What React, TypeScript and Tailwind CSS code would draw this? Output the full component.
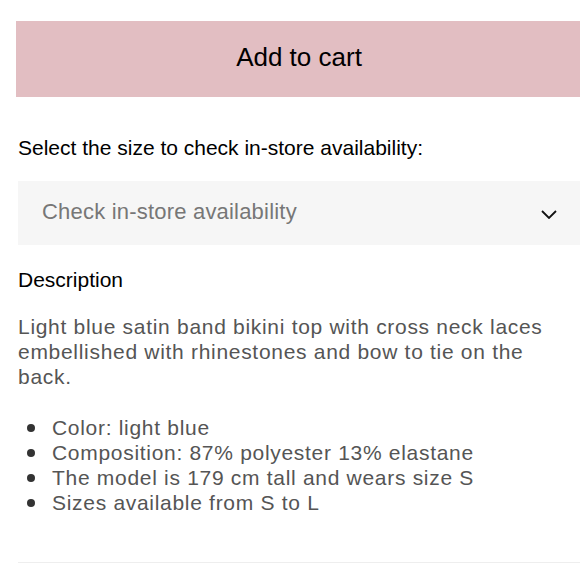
const details = [
  "Color: light blue",
  "Composition: 87% polyester 13% elastane",
  "The model is 179 cm tall and wears size S",
  "Sizes available from S to L",
];

export default function App() {
  return (
    <div className="min-h-screen w-[580px] overflow-hidden bg-white font-['Liberation_Sans',Arial,sans-serif]">
      <div className="pt-[21px] pl-4">
        {/* Add to cart */}
        <button className="flex h-[76px] w-[566px] items-center justify-center bg-[#e2bec2] pb-[3px] text-[26px] text-black">
          Add to cart
        </button>
      </div>

      <div className="pl-[18px]">
        <p className="mt-[38px] text-[21px] leading-[25px] text-black">
          Select the size to check in-store availability:
        </p>

        {/* In-store availability select */}
        <div className="mt-[21px] flex h-[64px] w-[562px] items-center justify-between bg-[#f6f6f6] pl-6 pr-[23px]">
          <span className="pb-[4px] text-[22px] tracking-[0.2px] text-[#777777]">Check in-store availability</span>
          <svg width="16" height="9" viewBox="0 0 16 9" className="mt-[2px]">
            <polyline points="1,1 8,8 15,1" fill="none" stroke="#111" strokeWidth="1.8" />
          </svg>
        </div>

        <h2 className="mt-[22px] text-[21px] leading-[25px] text-black">Description</h2>

        <p className="mt-[22px] w-[545px] text-[21px] leading-[25px] tracking-[0.7px] text-[#555555]">
          Light blue satin band bikini top with cross neck laces embellished with rhinestones and bow to tie on the back.
        </p>

        <ul className="mt-[26px] text-[21px] leading-[25px] tracking-[0.7px] text-[#555555]">
          {details.map((d) => (
            <li key={d} className="flex items-center">
              <span className="ml-[9px] mr-[17px] inline-block h-2 w-2 rounded-full bg-[#333333]" />
              {d}
            </li>
          ))}
        </ul>

        <div className="mt-[47px] h-px w-[562px] bg-[#eeeeee]" />
      </div>
    </div>
  );
}
